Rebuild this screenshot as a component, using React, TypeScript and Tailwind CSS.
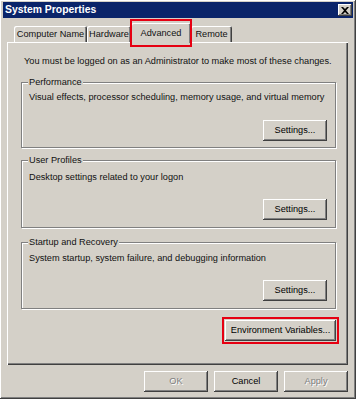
const raised =
  "shadow-[inset_-1px_-1px_0_#404040,inset_1px_1px_0_#ffffff,inset_-2px_-2px_0_#808080,inset_2px_2px_0_#d4d0c8]";

function Button({ label, disabled, className = "" }: { label: string; disabled?: boolean; className?: string }) {
  return (
    <div
      className={`flex items-center justify-center h-[21px] bg-[#d4d0c8] ${raised} ${
        disabled ? "text-[#808080] [text-shadow:1px_1px_0_#ffffff]" : "text-black"
      } ${className}`}
    >
      {label}
    </div>
  );
}

function Group({
  title,
  text,
  className = "",
  descGap,
  btnGap,
}: {
  title: string;
  text: string;
  className?: string;
  descGap: string;
  btnGap: string;
}) {
  return (
    <div
      className={`border border-[#808080] shadow-[inset_1px_1px_0_#ffffff,1px_1px_0_#ffffff] flex flex-col ${className}`}
    >
      <span className="-mt-[7px] ml-[6px] w-fit px-[1px] leading-[13px] bg-[#d4d0c8]">{title}</span>
      <p className={`pl-[7px] leading-[13px] ${descGap}`}>{text}</p>
      <Button label="Settings..." className={`w-[64px] self-end mr-[8px] ${btnGap}`} />
    </div>
  );
}

const tabs = [
  { label: "Computer Name", w: "w-[73px]" },
  { label: "Hardware", w: "w-[44px]" },
  { label: "Advanced", w: "w-[60px]", active: true },
  { label: "Remote", w: "w-[41px]" },
];

export default function App() {
  return (
    <div className="w-[357px] h-[400px] bg-white font-['Liberation_Sans',Arial,sans-serif] text-[9.2px] text-[#111]">
      <div className={`w-[356px] h-[399px] bg-[#d4d0c8] px-[3px] pt-[2px] flex flex-col ${raised}`}>
        {/* title bar */}
        <div className="h-[16px] bg-[#0a246a] flex items-center justify-between pl-[2px] pr-[1px]">
          <span className="text-white font-bold text-[10.4px] leading-none">System Properties</span>
          <div className={`w-[14px] h-[12px] bg-[#d4d0c8] flex items-center justify-center ${raised}`}>
            <svg width="8" height="7" viewBox="0 0 8 7">
              <path d="M0 0h2l2 2 2-2h2L5 3.5 8 7H6L4 5 2 7H0l3-3.5z" fill="#000" />
            </svg>
          </div>
        </div>

        <div className="px-[4px] flex flex-col">
          {/* tabs */}
          <div className="h-[24px] flex items-end pl-[7px]">
            {tabs.map((t) =>
              t.active ? (
                <div
                  key={t.label}
                  className={`relative z-10 ${t.w} h-[20px] -mb-[1px] bg-[#d4d0c8] flex items-center justify-center pt-[1px] shadow-[inset_1px_1px_0_#ffffff,inset_-1px_0_0_#404040,inset_-2px_0_0_#808080] rounded-t-[2px]`}
                >
                  {t.label}
                  <div className="absolute -left-[1px] -right-[1px] -top-[4px] -bottom-[4px] border-2 border-[#e60012]" />
                </div>
              ) : (
                <div
                  key={t.label}
                  className={`${t.w} h-[16px] flex items-center justify-center pt-[1px] shadow-[inset_1px_1px_0_#ffffff,inset_-1px_0_0_#404040,inset_-2px_0_0_#808080] rounded-t-[2px]`}
                >
                  {t.label}
                </div>
              )
            )}
          </div>

          {/* tab sheet */}
          <div className="w-[341px] h-[323px] flex flex-col pt-[13px] pl-[14px] pr-[12px] shadow-[inset_1px_1px_0_#ffffff,inset_-1px_-1px_0_#404040,inset_-2px_-2px_0_#808080]">
            <p className="pl-[3px] leading-[13px]">
              You must be logged on as an Administrator to make most of these changes.
            </p>
            <Group
              title="Performance"
              text="Visual effects, processor scheduling, memory usage, and virtual memory"
              className="mt-[14px] h-[66px]"
              descGap="mt-[2px]"
              btnGap="mt-[16px]"
            />
            <Group
              title="User Profiles"
              text="Desktop settings related to your logon"
              className="mt-[12px] h-[68px]"
              descGap="mt-[4px]"
              btnGap="mt-[15px]"
            />
            <Group
              title="Startup and Recovery"
              text="System startup, system failure, and debugging information"
              className="mt-[14px] h-[67px]"
              descGap="mt-[3px]"
              btnGap="mt-[15px]"
            />
            <div className="self-end -mr-[3px] mt-[8px] border-2 border-[#e60012] p-[1px]">
              <Button label="Environment Variables..." className="w-[111px] h-[20px]" />
            </div>
          </div>

          {/* dialog buttons */}
          <div className="mt-[6px] flex justify-end gap-[6px] pr-[1px]">
            <Button label="OK" disabled className="w-[64px]" />
            <Button label="Cancel" className="w-[64px]" />
            <Button label="Apply" disabled className="w-[64px]" />
          </div>
        </div>
      </div>
    </div>
  );
}
